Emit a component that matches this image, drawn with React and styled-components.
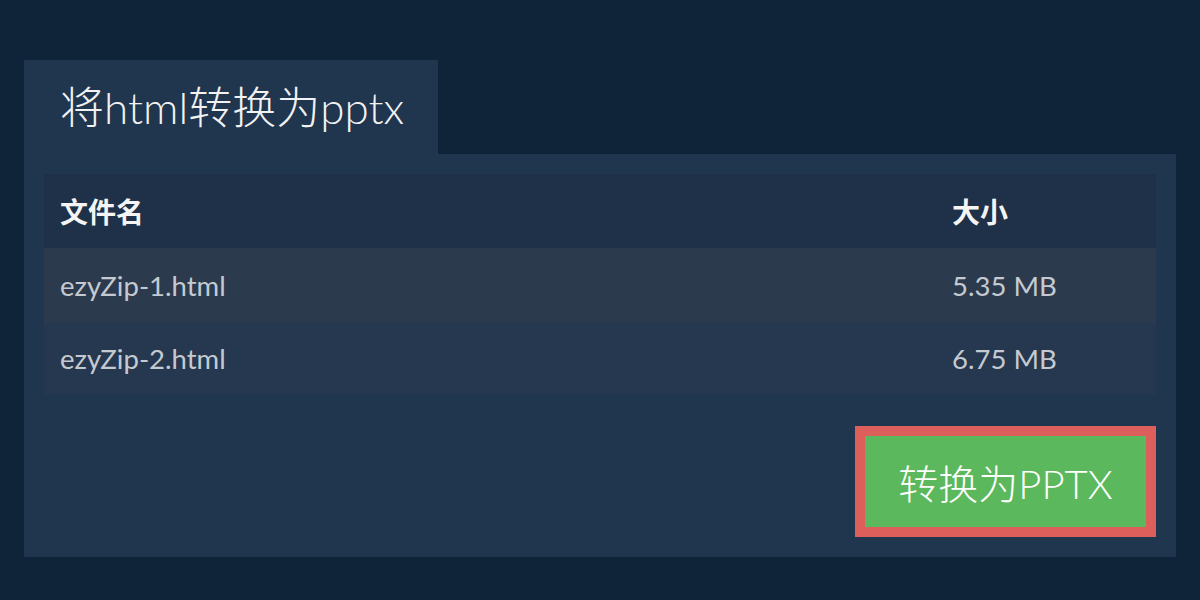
import styled, { createGlobalStyle } from "styled-components";

const Global = createGlobalStyle`
  html, body {
    margin: 0;
    background: #0f2339;
    font-family: Lato, "Noto Sans CJK SC", sans-serif;
  }
`;

const Page = styled.div`
  padding: 60px 24px 0 24px;
`;

const Tab = styled.div`
  display: inline-flex;
  align-items: center;
  height: 94px;
  padding: 0 34px 4px 36px;
  background: #20354e;
  color: #f2f2f2;
  font-size: 44px;
  font-weight: 300;
  box-sizing: border-box;
`;

const Panel = styled.div`
  background: #20354e;
  padding: 20px;
  display: flex;
  flex-direction: column;
  gap: 32px;
  height: 403px;
  box-sizing: border-box;
`;

const Table = styled.div`
  display: grid;
  grid-template-columns: 892px 1fr;
`;

const Row = styled.div`
  display: contents;
  & > div {
    background: ${(p) => p.$bg};
    height: ${(p) => p.$h}px;
  }
`;

const Cell = styled.div`
  display: flex;
  align-items: center;
  padding-left: 16px;
  font-size: ${(p) => (p.$head ? 28 : 27.5)}px;
  color: ${(p) => (p.$head ? "#f4f4f4" : "#c5cad1")};
  font-weight: ${(p) => (p.$head ? 700 : 400)};
`;

const Footer = styled.div`
  display: flex;
  justify-content: flex-end;
`;

const ConvertButton = styled.button`
  background: #5cb85c;
  border: 10px solid #dc5f5b;
  color: #fff;
  font-family: Lato, "Noto Sans CJK SC", sans-serif;
  font-size: 40px;
  font-weight: 300;
  width: 301px;
  height: 111px;
  padding: 0;
  cursor: pointer;
`;

const files = [
  { name: "ezyZip-1.html", size: "5.35 MB", bg: "#2b3b4d", h: 74 },
  { name: "ezyZip-2.html", size: "6.75 MB", bg: "#25384f", h: 72 },
];

export default function App() {
  return (
    <>
      <Global />
      <Page>
        <Tab>将html转换为pptx</Tab>
        <Panel>
          <Table>
            <Row $bg="#1e3148" $h={74}>
              <Cell $head>文件名</Cell>
              <Cell $head>大小</Cell>
            </Row>
            {files.map((f) => (
              <Row key={f.name} $bg={f.bg} $h={f.h}>
                <Cell>{f.name}</Cell>
                <Cell>{f.size}</Cell>
              </Row>
            ))}
          </Table>
          <Footer>
            <ConvertButton>转换为PPTX</ConvertButton>
          </Footer>
        </Panel>
      </Page>
    </>
  );
}
